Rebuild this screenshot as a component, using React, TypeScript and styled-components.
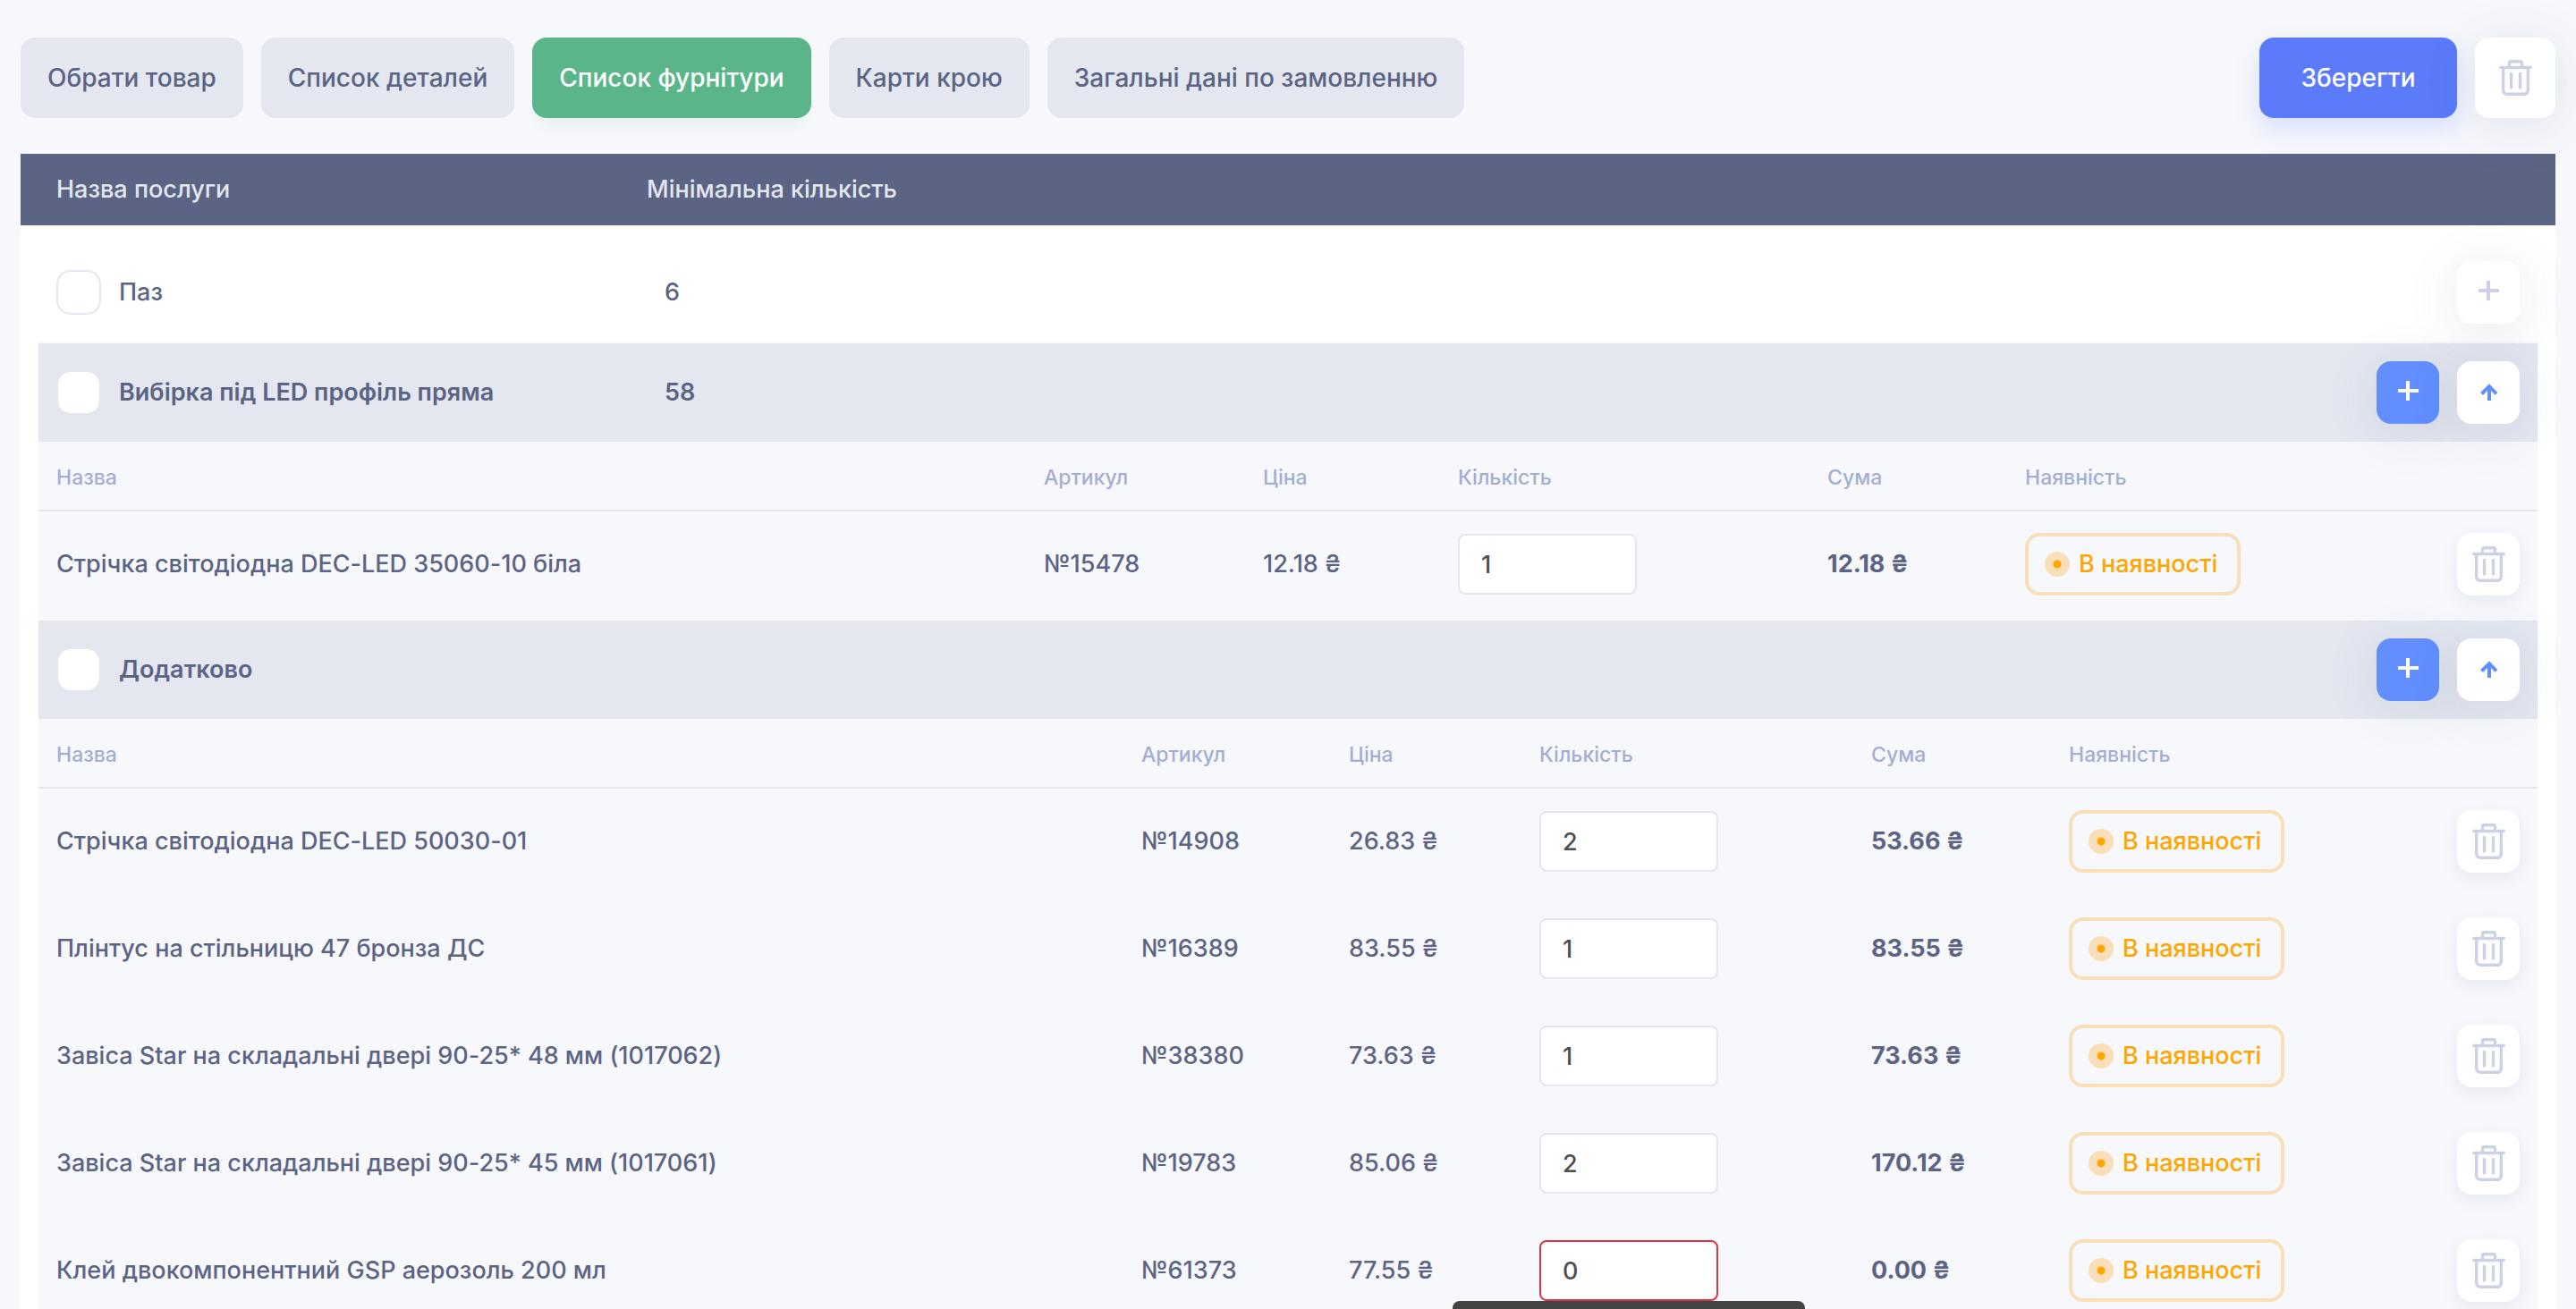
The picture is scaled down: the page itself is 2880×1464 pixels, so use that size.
import React, { useState } from "react";
import styled, { createGlobalStyle } from "styled-components";

const color = {
  page: "#f7f8fc",
  line: "#e4e7f0",
  text: "#5b6484",
  muted: "#a3aed2",
  icon: "#ccd1e5",
  blue: "#628eff",
  save: "#5b7bfa",
  green: "#5ab689",
  amber: "#fea500",
  amberSoft: "#f8dfb9",
  error: "#dc3545",
};

const GlobalStyle = createGlobalStyle`
  *, *::before, *::after { box-sizing: border-box; }
  html { background: ${color.page}; }
  body {
    margin: 0;
    color: ${color.text};
    font-family: Inter, "Noto Sans", sans-serif;
    font-size: 27px;
    font-weight: 500;
    line-height: 34px;
    font-variant-ligatures: no-contextual;
  }
  button, input { font: inherit; color: inherit; }
`;

const Page = styled.main`
  min-height: 100vh;
  padding: 42px 23px 0;
`;

const Toolbar = styled.header`
  display: flex;
  justify-content: space-between;
  gap: 20px;
  margin-bottom: 40px;
`;

const Group = styled.div`
  display: flex;
  gap: 20px;
`;

const Tabs = styled.nav`
  display: flex;
  gap: 20px;
`;

const Tab = styled.button<{ $active?: boolean }>`
  height: 90px;
  padding: 0 30px;
  border: 0;
  border-radius: 16px;
  cursor: pointer;
  white-space: nowrap;
  font-size: 28px;
  color: ${(p) => (p.$active ? "#fff" : color.text)};
  background: ${(p) => (p.$active ? color.green : color.line)};
  box-shadow: ${(p) => (p.$active ? "0 16px 16px -8px rgba(90, 182, 137, 0.12)" : "none")};
`;

const SaveButton = styled.button`
  min-width: 221px;
  height: 90px;
  padding: 0 40px;
  border: 0;
  border-radius: 16px;
  cursor: pointer;
  font-size: 28px;
  color: #fff;
  background: ${color.save};
  box-shadow: 0 12px 28px rgba(91, 123, 250, 0.2);
`;

const IconButton = styled.button<{ $size?: number; $tone?: "blue" | "soft"; $shadow?: "wide" | "small" }>`
  display: inline-flex;
  align-items: center;
  justify-content: center;
  flex: none;
  width: ${(p) => p.$size ?? 70}px;
  height: ${(p) => p.$size ?? 70}px;
  padding: 0;
  border: 0;
  border-radius: 16px;
  cursor: pointer;
  vertical-align: top;
  color: ${(p) => (p.$tone === "blue" ? "#fff" : p.$tone === "soft" ? color.icon : color.blue)};
  background: ${(p) => (p.$tone === "blue" ? color.blue : "#fff")};
  box-shadow: ${(p) =>
    p.$shadow === "small" ? "0 6px 18px rgba(91, 100, 160, 0.1)" : "0 8px 60px rgba(32, 72, 100, 0.12)"};
`;

const Services = styled.section`
  background: #fff;
`;

const ServicesHead = styled.div`
  display: grid;
  grid-template-columns: 660px 1fr;
  align-items: center;
  height: 80px;
  padding: 0 40px;
  color: ${color.line};
  background: ${color.text};
`;

const ServicesBody = styled.div`
  padding: 20px 20px 0;
`;

const ServiceRow = styled.div<{ $open?: boolean }>`
  display: grid;
  grid-template-columns: 680px 1fr auto;
  align-items: center;
  height: ${(p) => (p.$open ? 110 : 112)}px;
  padding: 0 20px;
  border-bottom: ${(p) => (p.$open ? "0" : `2px solid ${color.page}`)};
  font-weight: ${(p) => (p.$open ? 600 : 500)};
  background: ${(p) => (p.$open ? color.line : "transparent")};
`;

const CheckLabel = styled.label`
  display: flex;
  align-items: center;
  gap: 20px;
`;

const Checkbox = styled.input`
  appearance: none;
  width: 50px;
  height: 50px;
  margin: 0;
  border: 2px solid ${color.line};
  border-radius: 16px;
  background: #fff;
  cursor: pointer;

  &:checked {
    background: ${color.blue};
  }
`;

const Items = styled.div`
  padding-bottom: 2px;
  background: ${color.page};
`;

const Table = styled.table`
  width: 100%;
  table-layout: fixed;
  border-collapse: separate;
  border-spacing: 0;
`;

const Col = styled.col<{ $width?: number }>`
  width: ${(p) => (p.$width ? `${p.$width}px` : "auto")};
`;

const Th = styled.th`
  height: 78px;
  padding: 4px 20px 0;
  border-bottom: 2px solid ${color.line};
  text-align: left;
  font-size: 23px;
  font-weight: 500;
  color: ${color.muted};
`;

const Td = styled.td<{ $strong?: boolean; $end?: boolean }>`
  height: 120px;
  padding: 0 20px 2px;
  white-space: nowrap;
  text-align: ${(p) => (p.$end ? "right" : "left")};
  font-weight: ${(p) => (p.$strong ? 700 : 500)};
`;

const QuantityBox = styled.div`
  position: relative;
  width: 200px;
`;

const Quantity = styled.input<{ $invalid?: boolean }>`
  display: block;
  width: 100%;
  height: 68px;
  padding: 0 24px;
  border: 2px solid ${(p) => (p.$invalid ? color.error : color.line)};
  border-radius: 8px;
  outline: 0;
  color: #4f4f4f;
  background: #fff;
`;

const Tooltip = styled.div`
  position: absolute;
  top: 100%;
  left: 50%;
  width: 394px;
  height: 64px;
  margin-left: -197px;
  border-radius: 8px;
  background: #444446;
`;

const Status = styled.span`
  display: inline-flex;
  align-items: center;
  gap: 10px;
  height: 70px;
  padding: 0 22px 0 18px;
  border: 4px solid ${color.amberSoft};
  border-radius: 16px;
  color: ${color.amber};
  vertical-align: top;
`;

const Dot = styled.i`
  width: 28px;
  height: 28px;
  border-radius: 50%;
  background: radial-gradient(circle, ${color.amber} 4px, ${color.amberSoft} 5px);
`;

const TrashIcon = () => (
  <svg width="37" height="40" viewBox="0 0 37 40" fill="none" stroke={color.icon} strokeWidth="3.4" strokeLinecap="round" strokeLinejoin="round" aria-hidden="true">
    <path d="M1.7 8.5h33.6M11.5 8V3a1.3 1.3 0 0 1 1.3-1.3h11.4A1.3 1.3 0 0 1 25.5 3v5M4.7 9v25.3a4 4 0 0 0 4 4h19.6a4 4 0 0 0 4-4V9M13.5 15.5v15.5M23.5 15.5v15.5" />
  </svg>
);

const PlusIcon = () => (
  <svg width="24" height="28" viewBox="0 0 24 28" fill="none" stroke="currentColor" strokeWidth="4" aria-hidden="true">
    <path d="M1 12h23M12 1v22" />
  </svg>
);

const ArrowIcon = () => (
  <svg width="20" height="20" viewBox="0 0 20 20" fill="none" stroke="currentColor" strokeWidth="4" aria-hidden="true">
    <path d="M11 19V3M2.5 11.5L11 3l8 8.5" />
  </svg>
);

type Item = { name: string; code: string; price: string; qty: number; sum: string };

const ItemsTable = ({ widths, items }: { widths: number[]; items: Item[] }) => (
  <Items>
    <Table>
      <colgroup>
        <Col />
        {widths.map((w, i) => (
          <Col key={i} $width={w} />
        ))}
      </colgroup>
      <thead>
        <tr>
          <Th>Назва</Th>
          <Th>Артикул</Th>
          <Th>Ціна</Th>
          <Th>Кількість</Th>
          <Th>Сума</Th>
          <Th>Наявність</Th>
          <Th />
        </tr>
      </thead>
      <tbody>
        {items.map((item) => (
          <ItemRow key={item.code} item={item} />
        ))}
      </tbody>
    </Table>
  </Items>
);

const ItemRow = ({ item }: { item: Item }) => {
  const [qty, setQty] = useState(String(item.qty));
  const invalid = Number(qty) <= 0;
  return (
    <tr>
      <Td>{item.name}</Td>
      <Td>№{item.code}</Td>
      <Td>{item.price} ₴</Td>
      <Td>
        <QuantityBox>
          <Quantity
            aria-label="Кількість"
            aria-invalid={invalid}
            inputMode="numeric"
            $invalid={invalid}
            value={qty}
            onChange={(e) => setQty(e.target.value)}
          />
          {invalid && <Tooltip role="tooltip" />}
        </QuantityBox>
      </Td>
      <Td $strong>{item.sum} ₴</Td>
      <Td>
        <Status>
          <Dot />В наявності
        </Status>
      </Td>
      <Td $end>
        <IconButton type="button" $tone="soft" $shadow="small">
          <TrashIcon />
        </IconButton>
      </Td>
    </tr>
  );
};

const GroupRow = ({ name, min }: { name: string; min?: string }) => (
  <ServiceRow $open>
    <CheckLabel>
      <Checkbox type="checkbox" />
      {name}
    </CheckLabel>
    <span>{min}</span>
    <Group>
      <IconButton type="button" $tone="blue">
        <PlusIcon />
      </IconButton>
      <IconButton type="button">
        <ArrowIcon />
      </IconButton>
    </Group>
  </ServiceRow>
);

const tabs = ["Обрати товар", "Список деталей", "Список фурнітури", "Карти крою", "Загальні дані по замовленню"];

const ledItems: Item[] = [
  { name: "Стрічка світодіодна DEC-LED 35060-10 біла", code: "15478", price: "12.18", qty: 1, sum: "12.18" },
];

const extraItems: Item[] = [
  { name: "Стрічка світодіодна DEC-LED 50030-01", code: "14908", price: "26.83", qty: 2, sum: "53.66" },
  { name: "Плінтус на стільницю 47 бронза ДС", code: "16389", price: "83.55", qty: 1, sum: "83.55" },
  { name: "Завіса Star на складальні двері 90-25* 48 мм (1017062)", code: "38380", price: "73.63", qty: 1, sum: "73.63" },
  { name: "Завіса Star на складальні двері 90-25* 45 мм (1017061)", code: "19783", price: "85.06", qty: 2, sum: "170.12" },
  { name: "Клей двокомпонентний GSP аерозоль 200 мл", code: "61373", price: "77.55", qty: 0, sum: "0.00" },
];

export default function App() {
  const [active, setActive] = useState(2);
  return (
    <>
      <GlobalStyle />
      <Page>
        <Toolbar>
          <Tabs>
            {tabs.map((tab, i) => (
              <Tab key={tab} type="button" $active={i === active} onClick={() => setActive(i)}>
                {tab}
              </Tab>
            ))}
          </Tabs>
          <Group>
            <SaveButton type="button">Зберегти</SaveButton>
            <IconButton type="button" $size={90} $tone="soft">
              <TrashIcon />
            </IconButton>
          </Group>
        </Toolbar>
        <Services>
          <ServicesHead>
            <span>Назва послуги</span>
            <span>Мінімальна кількість</span>
          </ServicesHead>
          <ServicesBody>
            <ServiceRow>
              <CheckLabel>
                <Checkbox type="checkbox" />
                Паз
              </CheckLabel>
              <span>6</span>
              <IconButton type="button" $tone="soft">
                <PlusIcon />
              </IconButton>
            </ServiceRow>
            <GroupRow name="Вибірка під LED профіль пряма" min="58" />
            <ItemsTable widths={[245, 218, 413, 221, 400, 193]} items={ledItems} />
            <GroupRow name="Додатково" />
            <ItemsTable widths={[232, 213, 371, 221, 400, 144]} items={extraItems} />
          </ServicesBody>
        </Services>
      </Page>
    </>
  );
}
